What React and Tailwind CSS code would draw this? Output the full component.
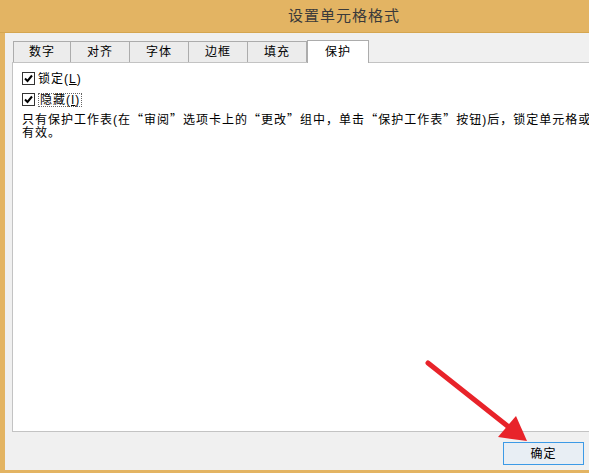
import React from 'react';

const tabs = ['数字', '对齐', '字体', '边框', '填充'];

const Check = () => (
  <div className="w-[13px] h-[13px] border border-[#333] bg-white flex items-center justify-center">
    <svg width="11" height="11" viewBox="0 0 11 11">
      <path d="M2 5.5 L4.5 8 L9 2.5" fill="none" stroke="#000" strokeWidth="2" />
    </svg>
  </div>
);

// full-width curly quote, as the dialog font draws it
const Q = ({ c }) => (
  <span className="font-['Noto_Sans_CJK_SC'] [font-feature-settings:'fwid']">{c}</span>
);

const App = () => {
  return (
    <div
      className="w-[589px] h-[473px] overflow-hidden bg-[#e3b463] relative text-[12px] tracking-[1px] text-black"
      style={{ fontFamily: '"Liberation Sans", "Noto Sans CJK SC", sans-serif' }}
    >
      {/* Title bar */}
      <div className="h-[33px] flex items-center pl-[288px] text-[15px] text-[#3a3a3a] border-b border-[#d5a650]">
        设置单元格格式
      </div>

      {/* Window body */}
      <div className="ml-[5px] w-[700px] h-[437px] bg-[#f0f0f0] pl-[7px] pt-[7px]">
        {/* Tabs */}
        <div className="flex items-end ml-[1px] h-[22px]">
          {tabs.map((t, i) => (
            <div
              key={t}
              className={`h-[21px] ${i === 0 ? 'w-[58px] border-l' : 'w-[59px]'} border-r border-t border-[#acacac] bg-[#ececec] flex items-center justify-center leading-none`}
            >
              {t}
            </div>
          ))}
          <div className="h-[23px] w-[62px] border-x border-t border-[#acacac] bg-white flex items-center justify-center leading-none -mb-px relative z-10">
            保护
          </div>
        </div>

        {/* Panel */}
        <div className="w-[680px] h-[370px] border border-[#c3c3c3] bg-white pl-[9px] pt-[8px]">
          <div className="flex items-center gap-[3px] h-[15px]">
            <Check />
            <span className="leading-none">
              锁定(<span className="underline">L</span>)
            </span>
          </div>
          <div className="flex items-center gap-[3px] h-[15px] mt-[6px]">
            <Check />
            <span className="leading-none border border-dotted border-[#666] px-px">
              隐藏(<span className="underline">I</span>)
            </span>
          </div>
          <div className="mt-[5px] leading-[13px] whitespace-nowrap">
            <div>
              只有保护工作表(在<Q c="“" />审阅<Q c="”" />选项卡上的<Q c="“" />更改<Q c="”" />组中，单击<Q c="“" />保护工作表<Q c="”" />按钮)后，锁定单元格或隐藏公式才
            </div>
            <div>有效。</div>
          </div>
        </div>

        {/* Bottom bar */}
        <div className="flex pl-[491px] pt-[10px]">
          <button className="w-[81px] h-[23px] border border-[#3c9ae6] bg-[#e8eef4] flex items-center justify-center leading-none">
            确定
          </button>
        </div>
      </div>

      {/* Red annotation arrow */}
      <svg className="absolute left-0 top-0 pointer-events-none" width="589" height="473">
        <line x1="428" y1="363" x2="510" y2="428" stroke="#e8232a" strokeWidth="5" strokeLinecap="round" />
        <polygon points="527,441 498,437 516,416" fill="#e8232a" />
      </svg>
    </div>
  );
};

export default App;
